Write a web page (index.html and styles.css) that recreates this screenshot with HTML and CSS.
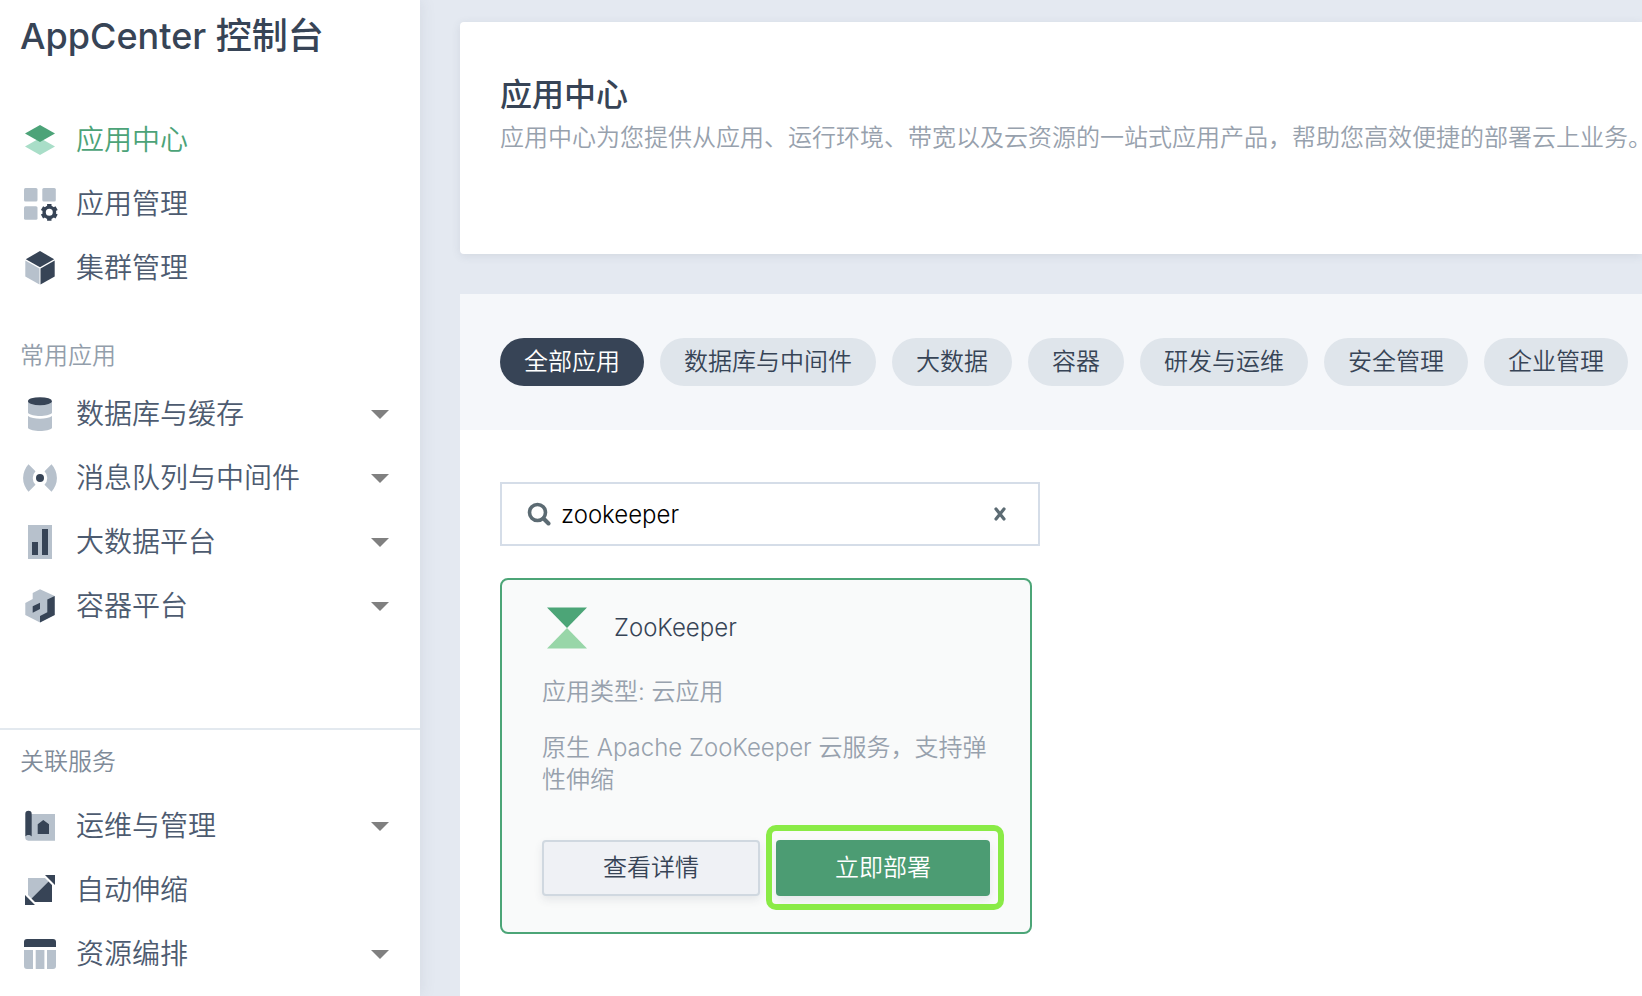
FILE: index.html
```html
<!DOCTYPE html>
<html lang="zh-CN">
<head>
<meta charset="utf-8">
<title>AppCenter 控制台</title>
<link rel="stylesheet" href="styles.css">
</head>
<body>
<div class="layout">
  <aside class="sidebar">
    <h1 class="brand">AppCenter 控制台</h1>
    <nav class="nav">
      <a class="nav-item active" href="#">
        <svg class="icon" viewBox="0 0 36 36"><path fill="#a9dec8" d="M18 16l15 8.500L18 33 3 24.500z"/><path fill="#4ca378" d="M18 3l15 8.500L18 20 3 11.500z"/></svg>
        <span>应用中心</span>
      </a>
      <a class="nav-item" href="#">
        <svg class="icon gear" viewBox="0 0 36 36"><g class="light"><rect x="2" y="2" width="13.500" height="13.500" rx="1.500"/><rect x="20.300" y="2" width="13.500" height="13.500" rx="1.500"/><rect x="2" y="20.300" width="13.500" height="13.500" rx="1.500"/></g><circle cx="27.300" cy="26.300" r="5.200" fill="none" stroke="#374456" stroke-width="3.400"/><g stroke="#374456" stroke-width="4.400"><path d="M27.300 17.900v3.200M27.300 31.500v3.200M20 22.100l2.800 1.600M31.800 28.900l2.800 1.600M20 30.500l2.800-1.600M31.800 23.700l2.800-1.600"/></g></svg>
        <span>应用管理</span>
      </a>
      <a class="nav-item" href="#">
        <svg class="icon" viewBox="0 0 36 36"><path class="dark" d="M18 1l14.200 8.200L18 17.200 3.800 9.200z"/><path class="light" d="M3.300 10.500l14.200 8V34.500l-14.200-8z"/><path class="dark" d="M32.700 10.500l-14.200 8V34.500l14.200-8z"/></svg>
        <span>集群管理</span>
      </a>
    </nav>
    <h2 class="group-title">常用应用</h2>
    <nav class="nav">
      <a class="nav-item" href="#">
        <svg class="icon" viewBox="0 0 36 36"><path class="light" d="M6 5h24v12c-4 4-20 4-24 0z"/><path class="light" d="M6 20c5 3.600 19 3.600 24 0V32c-3 4-21 4-24 0z"/><ellipse class="dark" cx="18" cy="5.200" rx="12" ry="4"/></svg>
        <span>数据库与缓存</span><i class="caret"></i>
      </a>
      <a class="nav-item" href="#">
        <svg class="icon" viewBox="0 0 36 36"><path class="light" d="M6.500 4.300L13.500 11.300a9.500 9.500 0 0 0 0 13.400L6.500 31.700A20 20 0 0 1 6.500 4.300zM29.500 4.300L22.500 11.300a9.500 9.500 0 0 1 0 13.400L29.500 31.700A20 20 0 0 0 29.500 4.300z"/><circle class="dark" cx="18" cy="18" r="4"/></svg>
        <span>消息队列与中间件</span><i class="caret"></i>
      </a>
      <a class="nav-item" href="#">
        <svg class="icon" viewBox="0 0 36 36"><path class="light" d="M6 1h24v34H6z"/><path class="dark" d="M10 18h6v13h-6zM20 5h6v26h-6z"/></svg>
        <span>大数据平台</span><i class="caret"></i>
      </a>
      <a class="nav-item" href="#">
        <svg class="icon" viewBox="0 0 36 36"><path class="light" d="M18 1.300L32.700 8v19L18 34.600 3.300 27V15l7.400-4V5z"/><path class="dark" d="M32.700 8v19L18 34.600V28l7.300-3.700V11.500zM10.700 18.300l7.300-3.600V21l-7.300 3.700z"/></svg>
        <span>容器平台</span><i class="caret"></i>
      </a>
    </nav>
    <section class="related">
      <h2 class="group-title muted">关联服务</h2>
      <nav class="nav">
        <a class="nav-item" href="#">
          <svg class="icon" viewBox="0 0 36 36"><path class="light" d="M9.500 6H33v26.700H6.300a3.200 3.200 0 0 1-3-3.400z"/><path class="dark" d="M3.300 6a3.200 3.200 0 0 1 6.400 0v22.500c-.8-2-5.500-2.300-6.400.3zM15.700 16.300l5.600-4.300 5.700 4.300V26H15.700z"/></svg>
          <span>运维与管理</span><i class="caret"></i>
        </a>
        <a class="nav-item" href="#">
          <svg class="icon" viewBox="0 0 36 36"><path class="light" d="M6 6h17l3.500 3.500-17 17L6 23z"/><path class="dark" d="M26.500 9.500L30 13v17H13l-3.500-3.500zM23 3h10v10zM3 23v10h10z"/></svg>
          <span>自动伸缩</span>
        </a>
        <a class="nav-item" href="#">
          <svg class="icon" viewBox="0 0 36 36"><path class="dark" d="M2 11V6a3 3 0 0 1 3-3h26a3 3 0 0 1 3 3v5z"/><path class="light" d="M2 14h9v19H5a3 3 0 0 1-3-3zM13.700 14h8.700v19h-8.700zM25 14h9v16a3 3 0 0 1-3 3h-6z"/></svg>
          <span>资源编排</span><i class="caret"></i>
        </a>
      </nav>
    </section>
  </aside>

  <main class="main">
    <header class="intro">
      <h2 class="intro-title">应用中心</h2>
      <p class="intro-text">应用中心为您提供从应用、运行环境、带宽以及云资源的一站式应用产品，帮助您高效便捷的部署云上业务。</p>
    </header>
    <section class="panel">
      <div class="tabs">
        <button class="tab selected" type="button">全部应用</button>
        <button class="tab" type="button">数据库与中间件</button>
        <button class="tab" type="button">大数据</button>
        <button class="tab" type="button">容器</button>
        <button class="tab" type="button">研发与运维</button>
        <button class="tab" type="button">安全管理</button>
        <button class="tab" type="button">企业管理</button>
      </div>
      <div class="content">
        <div class="search">
          <svg class="search-icon" viewBox="0 0 24 24"><circle cx="10.500" cy="10.500" r="8" fill="none" stroke="#5c6b73" stroke-width="3.600"/><path d="M16.500 16.500l5 5" stroke="#5c6b73" stroke-width="4" stroke-linecap="round"/></svg>
          <input class="search-input" type="text" value="zookeeper" aria-label="搜索应用">
          <button class="clear" type="button" aria-label="清除"><svg class="clear-icon" viewBox="0 0 12 14"><path d="M2 2l8 10M10 2L2 12" stroke="#5c6b73" stroke-width="3.200" stroke-linecap="round"/></svg></button>
        </div>
        <article class="app-card">
          <div class="app-head">
            <svg class="app-logo" viewBox="0 0 40 42"><path fill="#4ca577" d="M0 0.500h40L20 21z"/><path fill="#98d6a8" d="M0 41.500h40L20 21z"/></svg>
            <h3 class="app-name">ZooKeeper</h3>
          </div>
          <p class="app-type">应用类型: 云应用</p>
          <p class="app-desc">原生 Apache ZooKeeper 云服务，支持弹性伸缩</p>
          <div class="actions">
            <button class="btn" type="button">查看详情</button>
            <div class="spotlight"><button class="btn primary" type="button">立即部署</button></div>
          </div>
        </article>
      </div>
    </section>
  </main>
</div>
</body>
</html>
```
FILE: styles.css
```css
* { box-sizing: border-box; }

body {
  margin: 0;
  overflow: hidden;
  background: #e4e9f1;
  color: #374456;
  font-family: Inter, "Noto Sans CJK SC", sans-serif;
  font-size: 24px;
  font-weight: 350;
  line-height: 32px;
}

h1, h2, h3, p { margin: 0; font-size: inherit; font-weight: inherit; }

button, input {
  margin: 0;
  padding: 0;
  border: 0;
  background: none;
  color: inherit;
  font: inherit;
}

.layout { display: flex; height: 100vh; }

.sidebar {
  flex: 0 0 420px;
  background: #fff;
  box-shadow: 0 0 16px rgba(55, 68, 86, 0.1);
}

.brand {
  padding: 14px 20px 50px;
  font-size: 36px;
  font-weight: 500;
  line-height: 44px;
}

.nav-item {
  display: flex;
  align-items: center;
  height: 64px;
  padding: 0 31px 0 22px;
  color: #4d5b70;
  font-size: 28px;
  text-decoration: none;
}

.nav-item.active { color: #4ca378; }

.icon { width: 36px; height: 36px; margin-right: 18px; }
.light { fill: #b7c1cc; }
.dark { fill: #374456; }

.caret {
  margin-left: auto;
  border: 9px solid transparent;
  border-top-color: #808080;
  border-bottom: 0;
}

.group-title { padding: 40px 20px 10px; color: #939eab; }

.related { margin-top: 90px; border-top: 2px solid #e3e9ef; }
.group-title.muted { padding: 16px 20px; color: #7f8b99; }

.main { flex: 1; display: flex; flex-direction: column; min-width: 0; padding: 22px 0 0 40px; }

.intro {
  height: 232px;
  padding: 52px 0 0 40px;
  border-radius: 4px 0 0 4px;
  background: #fff;
  box-shadow: 0 2px 10px rgba(55, 68, 86, 0.1);
}

.intro-title { font-size: 32px; font-weight: 500; line-height: 42px; }
.intro-text { color: #97a1ad; line-height: 44px; white-space: nowrap; }

.panel { flex: 1; margin-top: 40px; background: #fff; }

.tabs { display: flex; gap: 16px; padding: 44px 0 44px 40px; background: #f5f7fa; }

.tab {
  height: 48px;
  padding: 0 24px;
  border-radius: 24px;
  background: #dfe5eb;
  white-space: nowrap;
}

.tab.selected { background: #374456; color: #fff; }

.content { padding: 52px 40px; }

.search {
  display: flex;
  align-items: center;
  width: 540px;
  height: 64px;
  padding: 0 25px;
  border: 2px solid #d5dde8;
}

.search-icon { width: 24px; height: 24px; }
.search-input { flex: 1; min-width: 0; margin-left: 10px; padding-top: 2px; outline: 0; color: #000; }
.clear { display: flex; padding: 6px; }
.clear-icon { width: 14px; height: 14px; }

.app-card {
  width: 532px;
  margin-top: 32px;
  padding: 24px 40px 36px;
  border: 2px solid #4ca577;
  border-radius: 8px;
  background: #f9fafa;
}

.app-head { display: flex; align-items: center; gap: 27px; height: 48px; padding-left: 5px; }
.app-logo { width: 40px; height: 42px; }
.app-type { margin-top: 24px; color: #97a1ad; }
.app-desc { margin-top: 24px; color: #97a1ad; }

.actions { display: flex; gap: 16px; margin-top: 44px; }

.btn {
  height: 56px;
  padding: 0 59px;
  border: 2px solid #d0d8e0;
  border-radius: 4px;
  background: #eff1f5;
  box-shadow: 0 4px 8px rgba(55, 68, 86, 0.1);
  white-space: nowrap;
}

.btn.primary { border: 0; background: #4c9c73; color: #fff; }

.spotlight { position: relative; }

.spotlight::after {
  content: "";
  position: absolute;
  inset: -15px -14px -14px -10px;
  border: 6px solid #8aeb46;
  border-radius: 10px;
  pointer-events: none;
}
```
